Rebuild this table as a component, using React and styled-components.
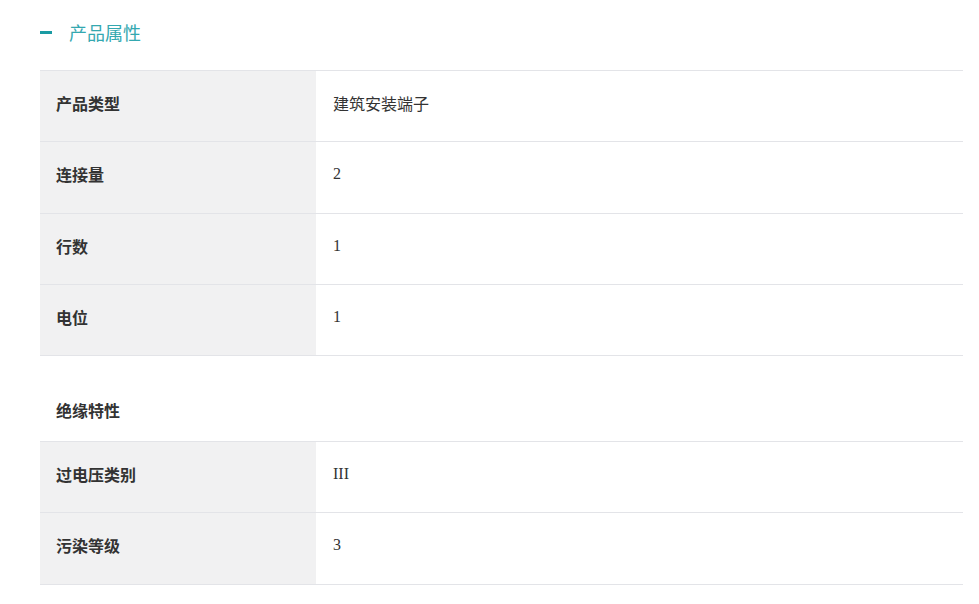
import React from "react";
import styled, { createGlobalStyle } from "styled-components";

const GlobalStyle = createGlobalStyle`
  body {
    margin: 0;
    background: #fff;
    font-family: "Noto Sans", "Noto Sans CJK SC", sans-serif;
  }
`;

const Page = styled.div`
  padding: 19px 16px 0 40px;
`;

const Header = styled.div`
  display: flex;
  align-items: center;
  height: 26px;
  margin-bottom: 25px;
`;

const Minus = styled.span`
  width: 12px;
  height: 3px;
  background: #1a9ba3;
  margin-right: 17px;
`;

const Title = styled.h2`
  margin: 0;
  font-size: 18px;
  font-weight: 400;
  color: #34a8b0;
  font-family: "Noto Sans CJK SC", sans-serif;
`;

const Table = styled.div`
  border-top: 1px solid #e3e4e8;
`;

const Row = styled.div`
  display: grid;
  grid-template-columns: 276px 1fr;
  height: 70.25px;
  border-bottom: 1px solid #e3e4e8;
`;

const Label = styled.div`
  background: #f1f1f2;
  display: flex;
  align-items: center;
  padding: 0 16px 6px;
  font-family: "Noto Sans CJK SC", sans-serif;
  font-weight: 700;
  font-size: 16px;
  color: #333;
`;

const Value = styled.div`
  display: flex;
  align-items: center;
  padding: 0 17px 6px;
  font-family: "Liberation Serif", "Noto Sans CJK SC", serif;
  font-size: 16px;
  color: #333;
`;

const Section = styled.div`
  height: 86px;
  padding: 42px 16px 0;
  box-sizing: border-box;
  border-bottom: 1px solid #e3e4e8;
  font-family: "Noto Sans CJK SC", sans-serif;
  font-weight: 700;
  font-size: 16px;
  color: #333;
`;

const rows = [
  ["产品类型", "建筑安装端子"],
  ["连接量", "2"],
  ["行数", "1"],
  ["电位", "1"],
];

const insulation = [
  ["过电压类别", "III"],
  ["污染等级", "3"],
];

export default function App() {
  return (
    <>
      <GlobalStyle />
      <Page>
        <Header>
          <Minus />
          <Title>产品属性</Title>
        </Header>
        <Table>
          {rows.map(([k, v]) => (
            <Row key={k}>
              <Label>{k}</Label>
              <Value>{v}</Value>
            </Row>
          ))}
          <Section>绝缘特性</Section>
          {insulation.map(([k, v]) => (
            <Row key={k}>
              <Label>{k}</Label>
              <Value>{v}</Value>
            </Row>
          ))}
        </Table>
      </Page>
    </>
  );
}
